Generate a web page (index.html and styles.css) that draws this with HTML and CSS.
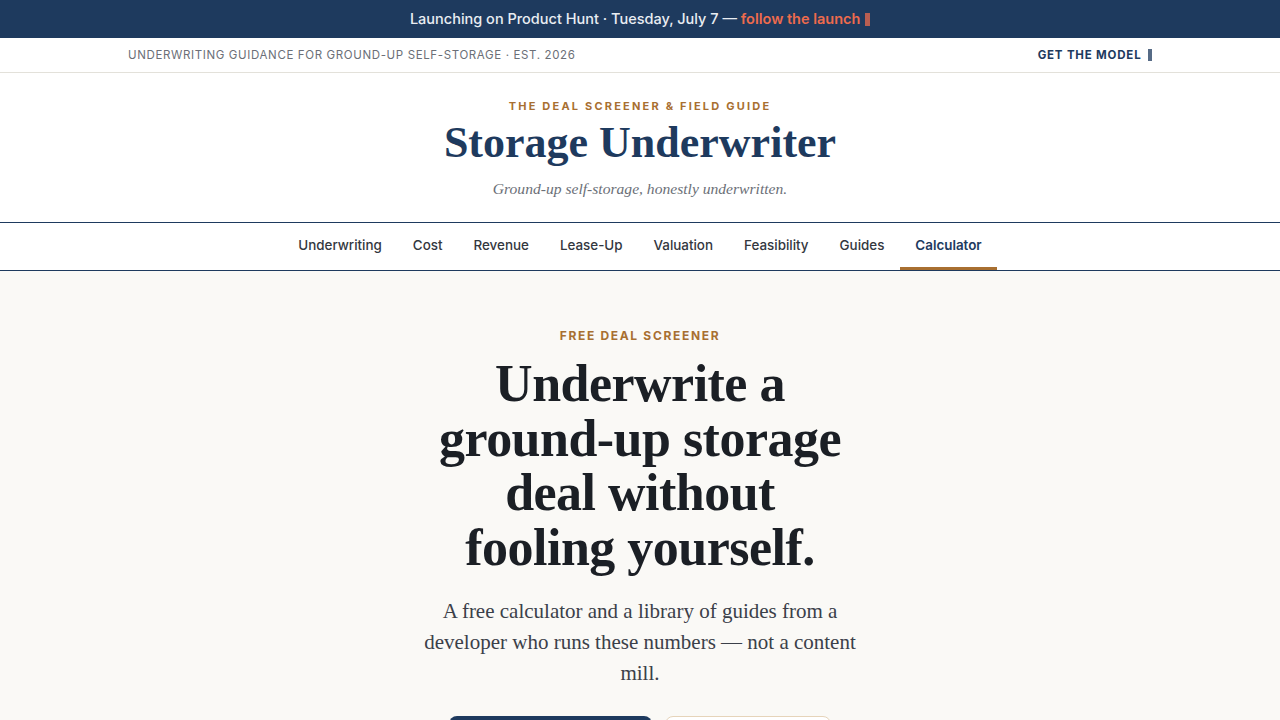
FILE: index.html
```html
<!DOCTYPE html>
<html lang="en">
<head>
  <meta charset="UTF-8">
  <meta name="viewport" content="width=device-width, initial-scale=1.0">
  <title>Storage Underwriter — The Deal Screener &amp; Field Guide</title>
  <link rel="stylesheet" href="styles.css">
</head>
<body>
  <!-- launch banner -->
  <div class="announce">
    Launching on Product Hunt · Tuesday, July 7 — <a href="#" class="announce-link">follow the launch <span class="glyph"></span></a>
  </div>

  <!-- utility bar -->
  <div class="utility">
    <div class="container utility-inner">
      <span class="tagline">Underwriting guidance for ground-up self-storage · Est. 2026</span>
      <a href="#" class="model-link">Get the model <span class="glyph"></span></a>
    </div>
  </div>

  <!-- masthead -->
  <header class="masthead">
    <p class="kicker">The Deal Screener &amp; Field Guide</p>
    <h1 class="brand">Storage Underwriter</h1>
    <p class="strap">Ground-up self-storage, honestly underwritten.</p>
  </header>

  <!-- main nav -->
  <nav class="nav">
    <a href="#">Underwriting</a>
    <a href="#">Cost</a>
    <a href="#">Revenue</a>
    <a href="#">Lease-Up</a>
    <a href="#">Valuation</a>
    <a href="#">Feasibility</a>
    <a href="#">Guides</a>
    <a href="#" class="active">Calculator</a>
  </nav>

  <!-- hero -->
  <section class="hero">
    <p class="eyebrow">Free deal screener</p>
    <h2 class="headline">Underwrite a ground-up storage deal without fooling yourself.</h2>
    <p class="lede">A free calculator and a library of guides from a developer who runs these numbers — not a content mill.</p>
    <div class="actions">
      <a href="#" class="btn btn-primary">Run the calculator</a>
      <a href="#" class="btn btn-ghost">Read the guides</a>
    </div>
  </section>
</body>
</html>
```

FILE: styles.css
```css
:root {
  --navy:      #1e3a5e;
  --brown:     #a86f31;
  --coral:     #ee6b4d;
  --ink:       #1b1f25;
  --muted:     #6b6f77;
  --rule:      #e3e1da;
  --paper:     #faf9f6;
  --sans:      Inter, "Noto Sans", sans-serif;
  --serif:     "Liberation Serif", "Times New Roman", serif;
}
* { box-sizing: border-box; }
body {
  margin: 0;
  font-family: var(--sans);
  color: var(--ink);
  background: var(--paper);
}
a { text-decoration: none; color: inherit; }
.container {
  max-width: 1024px;
  margin: 0 auto;
}
/* small box glyph after links */
.glyph {
  display: inline-block;
  width: 5px;
  height: 13px;
  background: currentColor;
  opacity: 0.75;
  vertical-align: -2px;
  margin-left: 1px;
}
/* banner */
.announce {
  background: var(--navy);
  color: #e9edf2;
  font-size: 14.5px;
  font-weight: 500;
  height: 38px;
  line-height: 38px;
  text-align: center;
}
.announce-link {
  color: var(--coral);
  font-weight: 600;
}
/* utility bar */
.utility {
  background: #fff;
  border-bottom: 1px solid var(--rule);
  height: 35px;
}
.utility-inner {
  display: flex;
  align-items: center;
  justify-content: space-between;
  height: 100%;
  font-size: 11.5px;
  text-transform: uppercase;
}
.tagline {
  color: var(--muted);
  letter-spacing: 0.055em;
}
.model-link {
  color: var(--navy);
  font-weight: 700;
  letter-spacing: 0.07em;
}
.model-link .glyph { height: 12px; margin-left: 3px; width: 4px; }
/* masthead */
.masthead {
  background: #fff;
  text-align: center;
  padding: 26px 0 23px;
  border-bottom: 1px solid var(--navy);
}
.kicker {
  margin: 0;
  font-size: 11px;
  font-weight: 700;
  letter-spacing: 0.2em;
  text-transform: uppercase;
  color: var(--brown);
}
.brand {
  margin: 4px 0 0;
  font-family: var(--serif);
  font-size: 44px;
  line-height: 52px;
  font-weight: 700;
  color: var(--navy);
}
.strap {
  margin: 10px 0 0;
  font-family: var(--serif);
  font-style: italic;
  font-size: 15.6px;
  line-height: 20px;
  color: var(--muted);
}
/* nav */
.nav {
  background: #fff;
  display: flex;
  justify-content: center;
  border-bottom: 1px solid var(--navy);
}
.nav a {
  padding: 14px 15.5px;
  font-size: 13.4px;
  font-weight: 500;
  color: #33373e;
  border-bottom: 3px solid transparent;
}
.nav a.active {
  color: var(--navy);
  font-weight: 600;
  border-bottom-color: var(--brown);
}
/* hero */
.hero {
  text-align: center;
  padding: 57px 0 40px;
}
.eyebrow {
  margin: 0;
  font-size: 12px;
  font-weight: 700;
  letter-spacing: 0.14em;
  text-transform: uppercase;
  color: var(--brown);
}
.headline {
  max-width: 420px;
  margin: 14px auto 0;
  font-family: var(--serif);
  font-size: 52px;
  line-height: 54.5px;
  font-weight: 700;
  letter-spacing: -0.01em;
  color: var(--ink);
}
.lede {
  max-width: 450px;
  margin: 21px auto 0;
  font-family: var(--serif);
  font-size: 21px;
  line-height: 31px;
  color: #3b4049;
}
.actions {
  display: flex;
  justify-content: center;
  gap: 13px;
  margin-top: 27px;
}
.btn {
  display: inline-block;
  padding: 15px 26px;
  border-radius: 8px;
  font-size: 15px;
  font-weight: 600;
}
.btn-primary {
  background: var(--navy);
  color: #fff;
  width: 203px;
}
.btn-ghost {
  background: #fff;
  border: 1px solid #e6d4ba;
  color: var(--navy);
  width: 166px;
}
```
